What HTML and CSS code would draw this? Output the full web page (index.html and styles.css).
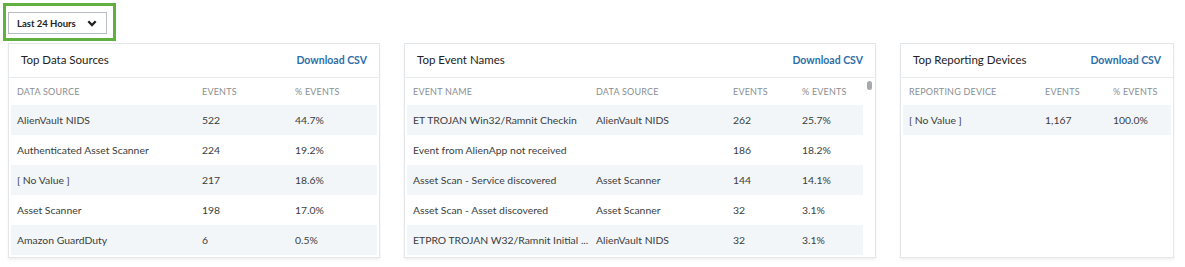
FILE: index.html
```html
<!DOCTYPE html>
<html>
<head>
<meta charset="utf-8">
<link rel="stylesheet" href="styles.css">
</head>
<body>
<div class="toolbar">
  <div class="highlight">
    <div class="select">
      <span class="select-label">Last 24 Hours</span>
      <svg class="chev" width="10" height="7" viewBox="0 0 10 7"><path d="M1.3 1.3 L5 5 L8.7 1.3" fill="none" stroke="#222" stroke-width="2.3"/></svg>
    </div>
  </div>
</div>
<div class="cards">
  <section class="card card-sources">
    <header class="card-head"><h2>Top Data Sources</h2><a class="csv">Download CSV</a></header>
    <div class="table-wrap">
      <table>
        <thead><tr><th class="c1">Data Source</th><th class="c2">Events</th><th>% Events</th></tr></thead>
        <tbody>
          <tr><td>AlienVault NIDS</td><td>522</td><td>44.7%</td></tr>
          <tr><td>Authenticated Asset Scanner</td><td>224</td><td>19.2%</td></tr>
          <tr><td>[ No Value ]</td><td>217</td><td>18.6%</td></tr>
          <tr><td>Asset Scanner</td><td>198</td><td>17.0%</td></tr>
          <tr><td>Amazon GuardDuty</td><td>6</td><td>0.5%</td></tr>
        </tbody>
      </table>
    </div>
  </section>
  <section class="card card-events">
    <header class="card-head"><h2>Top Event Names</h2><a class="csv">Download CSV</a></header>
    <div class="table-wrap scroll">
      <table>
        <thead><tr><th class="c1">Event Name</th><th class="c2">Data Source</th><th class="c3">Events</th><th>% Events</th></tr></thead>
        <tbody>
          <tr><td class="trunc">ET TROJAN Win32/Ramnit Checkin</td><td>AlienVault NIDS</td><td>262</td><td>25.7%</td></tr>
          <tr><td class="trunc">Event from AlienApp not received</td><td></td><td>186</td><td>18.2%</td></tr>
          <tr><td class="trunc">Asset Scan - Service discovered</td><td>Asset Scanner</td><td>144</td><td>14.1%</td></tr>
          <tr><td class="trunc">Asset Scan - Asset discovered</td><td>Asset Scanner</td><td>32</td><td>3.1%</td></tr>
          <tr><td class="trunc">ETPRO TROJAN W32/Ramnit Initial ...</td><td>AlienVault NIDS</td><td>32</td><td>3.1%</td></tr>
        </tbody>
      </table>
      <div class="thumb"></div>
    </div>
  </section>
  <section class="card card-devices">
    <header class="card-head"><h2>Top Reporting Devices</h2><a class="csv">Download CSV</a></header>
    <div class="table-wrap">
      <table>
        <thead><tr><th class="c1">Reporting Device</th><th class="c2">Events</th><th>% Events</th></tr></thead>
        <tbody>
          <tr><td>[ No Value ]</td><td>1,167</td><td>100.0%</td></tr>
        </tbody>
      </table>
    </div>
  </section>
</div>
</body>
</html>
```
FILE: styles.css
```css
* { box-sizing: border-box; }
html, body { margin: 0; padding: 0; background: #fff; }
body {
  font-family: "Lato", "Open Sans", sans-serif;
  color: #333;
  width: 1185px;
  height: 267px;
  overflow: hidden;
}
.toolbar { padding: 3px 0 0 3px; }
.highlight {
  display: inline-block;
  border: 3px solid #5fb03f;
  padding: 6px 6px 4px 2px;
}
.select {
  width: 99px;
  height: 22px;
  border: 1px solid #b9bec6;
  display: flex;
  align-items: center;
  padding: 0 9px 0 8px;
  justify-content: space-between;
  font-size: 9.5px;
  font-weight: 700;
  color: #222;
}
.chev { display: block; }
.cards {
  display: flex;
  gap: 24px;
  padding: 2px 0 0 8px;
  align-items: flex-start;
}
.card {
  height: 215px;
  border: 1px solid #e4e7ea;
  box-shadow: 0 2px 3px rgba(0,0,0,0.06);
  background: #fff;
  display: flex;
  flex-direction: column;
}
.card-sources { width: 372px; }
.card-events { width: 472px; }
.card-devices { width: 274px; }
.card-head {
  height: 34px;
  border-bottom: 1px solid #e8ebee;
  display: flex;
  align-items: center;
  justify-content: space-between;
  padding: 0 12px 2px 12px;
}
.card-head h2 {
  margin: 0;
  font-size: 11.5px;
  font-weight: 400;
  color: #222;
}
.csv {
  font-size: 10.5px;
  font-weight: 700;
  color: #2c6ea8;
}
.table-wrap { padding: 0 2px; position: relative; }
.table-wrap.scroll { padding-right: 12px; }
table { width: 100%; border-collapse: collapse; table-layout: fixed; }
th {
  height: 27px;
  text-align: left;
  font-weight: 400;
  font-size: 9px;
  letter-spacing: 0.2px;
  text-transform: uppercase;
  color: #8a8e93;
  padding: 0 0 0 6px;
}
td {
  height: 30px;
  font-size: 10.4px;
  color: #3a3d40;
  padding: 0 0 0 6px;
  white-space: nowrap;
}
tbody tr:nth-child(odd) td { background: #f3f6f8; }
.trunc { overflow: hidden; text-overflow: ellipsis; }
.card-sources .c1 { width: 185px; }
.card-sources .c2 { width: 93px; }
.card-events .c1 { width: 183px; }
.card-events .c2 { width: 137px; }
.card-events .c3 { width: 69px; }
.card-devices .c1 { width: 136px; }
.card-devices .c2 { width: 68px; }
.thumb {
  position: absolute;
  right: 3px;
  top: 3px;
  width: 5px;
  height: 9px;
  border-radius: 3px;
  background: #a6a9ad;
}
```
